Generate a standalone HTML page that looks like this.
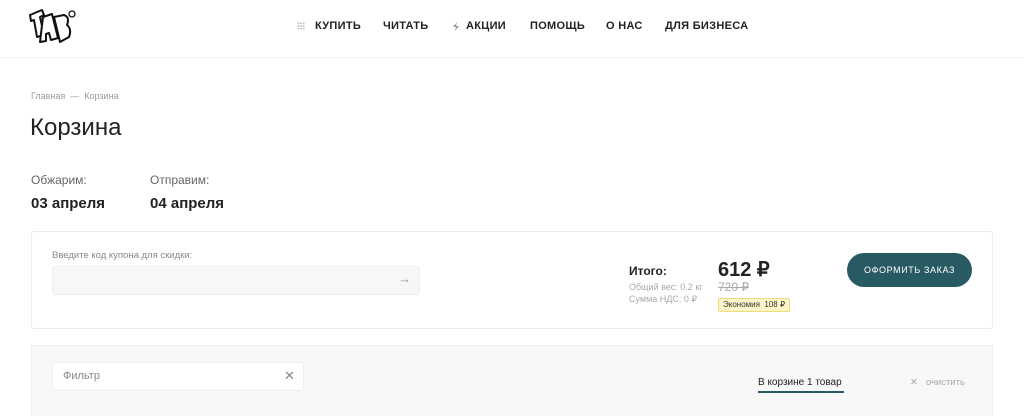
<!DOCTYPE html>
<html><head><meta charset="utf-8"><style>
*{margin:0;padding:0;box-sizing:border-box}
html,body{width:1024px;height:416px;overflow:hidden}
body{background:#fff;font-family:"Liberation Sans",sans-serif;color:#222;position:relative}
.a{position:absolute;white-space:nowrap}
.nav{font-size:11px;font-weight:bold;letter-spacing:.3px;color:#222;top:20px}
</style></head><body>
<div class="a" style="left:0;top:57px;width:1024px;height:1px;background:#f0f0f0"></div>
<svg class="a" style="left:26px;top:5px" width="52" height="42" viewBox="0 0 52 42">
<g stroke="#111" stroke-width="2" fill="#fff" stroke-linejoin="round">
<path d="M4 10 L16 5 L18 10 L14 12 L18 30 L11 32 L8 15 L5 16Z"/>
<path d="M17 12 L26 9 L32 33 L25 35 L23 28 L20 29 L20 36 L14 37Z"/>
<path d="M28 12 L38 10 Q44 12 41 20 Q46 24 43 32 L34 37Z"/>
</g><circle cx="46" cy="9" r="3" fill="none" stroke="#111" stroke-width="1.3"/></svg>
<div class="a" style="left:297px;top:22px;width:8px;height:8px;background:radial-gradient(circle,#bbb 0.8px,transparent 1px) 0 0/2.7px 2.7px"></div>
<div class="a nav" style="left:315px">КУПИТЬ</div>
<div class="a nav" style="left:383px">ЧИТАТЬ</div>
<svg class="a" style="left:453px;top:22px" width="6" height="9" viewBox="0 0 6 9"><path d="M4 0 L0 5 L3 5 L2 9 L6 4 L3 4Z" fill="#999"/></svg>
<div class="a nav" style="left:466px">АКЦИИ</div>
<div class="a nav" style="left:530px">ПОМОЩЬ</div>
<div class="a nav" style="left:606px">О НАС</div>
<div class="a nav" style="left:665px">ДЛЯ БИЗНЕСА</div>

<div class="a" style="left:31px;top:91px;font-size:9px;color:#999">Главная &nbsp;—&nbsp; Корзина</div>
<div class="a" style="left:30px;top:114px;font-size:24px;color:#222">Корзина</div>
<div class="a" style="left:31px;top:173px;font-size:12px;color:#666">Обжарим:</div>
<div class="a" style="left:150px;top:173px;font-size:12px;color:#666">Отправим:</div>
<div class="a" style="left:31px;top:195px;font-size:15px;font-weight:bold">03 апреля</div>
<div class="a" style="left:150px;top:195px;font-size:15px;font-weight:bold">04 апреля</div>

<div class="a" style="left:31px;top:231px;width:962px;height:98px;border:1px solid #ececec;border-radius:3px"></div>
<div class="a" style="left:52px;top:250px;font-size:9.5px;color:#888">Введите код купона для скидки:</div>
<div class="a" style="left:52px;top:266px;width:368px;height:29px;background:#f7f7f7;border:1px solid #eee;border-radius:3px"></div>
<div class="a" style="left:398px;top:271px;font-size:13px;color:#999">→</div>
<div class="a" style="left:629px;top:264px;font-size:12px;font-weight:bold">Итого:</div>
<div class="a" style="left:629px;top:281px;font-size:9px;color:#aaa;line-height:12px">Общий вес: 0.2 кг<br>Сумма НДС: 0 ₽</div>
<div class="a" style="left:718px;top:257px;font-size:20px;font-weight:bold">612 ₽</div>
<div class="a" style="left:718px;top:280px;font-size:12px;color:#aaa;text-decoration:line-through">720 ₽</div>
<div class="a" style="left:718px;top:298px;height:14px;padding:0 4px;font-size:8px;line-height:12px;background:#fdf6c8;border:1px solid #f0dc7a;border-radius:2px;color:#333">Экономия&nbsp; 108 ₽</div>
<div class="a" style="left:847px;top:253px;width:125px;height:34px;border-radius:17px;background:#285a63;color:#fff;font-size:9px;letter-spacing:.6px;text-align:center;line-height:34px">ОФОРМИТЬ ЗАКАЗ</div>

<div class="a" style="left:31px;top:345px;width:962px;height:71px;background:#f8f8f8;border:1px solid #f0f0f0;border-bottom:none"></div>
<div class="a" style="left:52px;top:362px;width:252px;height:29px;background:#fff;border:1px solid #eee;border-radius:3px"></div>
<div class="a" style="left:63px;top:370px;font-size:11px;color:#888">Фильтр</div>
<div class="a" style="left:284px;top:368px;font-size:13px;color:#888">✕</div>
<div class="a" style="left:758px;top:377px;font-size:10px;color:#222">В корзине 1 товар</div>
<div class="a" style="left:758px;top:391px;width:86px;height:2px;background:#285a63"></div>
<div class="a" style="left:910px;top:377px;font-size:9.5px;color:#aaa">✕ &nbsp;&nbsp;очистить</div>
</body></html>
